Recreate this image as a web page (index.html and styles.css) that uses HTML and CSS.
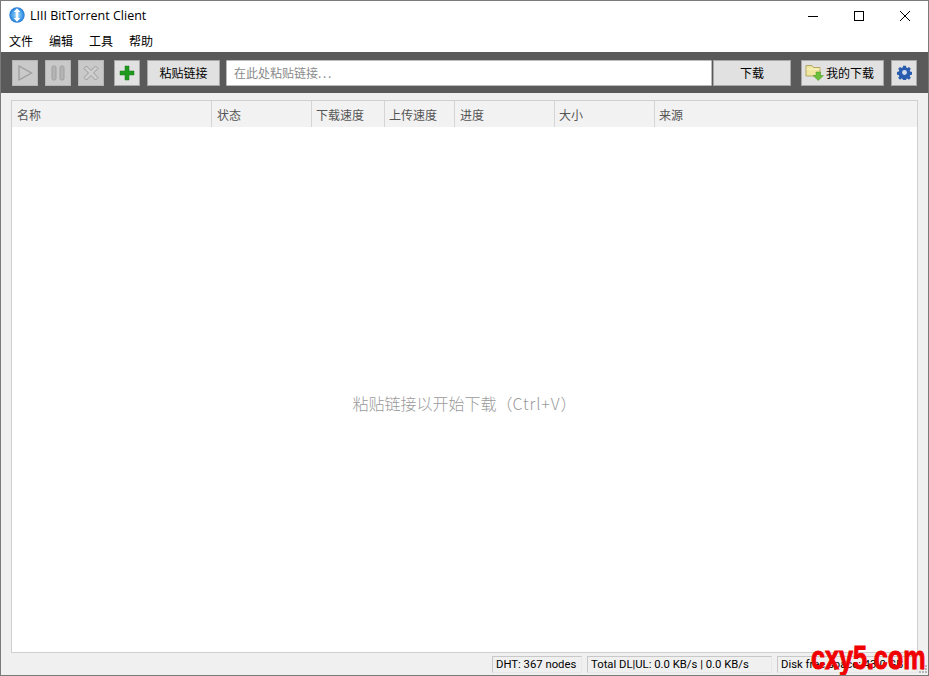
FILE: index.html
```html
<!DOCTYPE html>
<html lang="zh">
<head>
<meta charset="utf-8">
<title>LIII BitTorrent Client</title>
<link rel="stylesheet" href="styles.css">
</head>
<body>
<div class="window">
  <div class="titlebar">
    <svg class="app-icon" width="16" height="16" viewBox="0 0 16 16"><defs><radialGradient id="g" cx="50%" cy="50%" r="55%"><stop offset="0" stop-color="#a9dcfb"/><stop offset=".6" stop-color="#4aa3ec"/><stop offset="1" stop-color="#1568c8"/></radialGradient></defs><circle cx="8" cy="8" r="7.700" fill="url(#g)"/><path d="M8 1.200 11.300 5H9.300v6h2L8 14.800 4.700 11h2V5h-2z" fill="#fff"/></svg>
    <span class="title">LIII BitTorrent Client</span>
    <div class="winctrls">
      <span class="winbtn"><svg width="12" height="12" viewBox="0 0 12 12"><path d="M1 6.500h10" stroke="#000" fill="none"/></svg></span>
      <span class="winbtn"><svg width="12" height="12" viewBox="0 0 12 12"><rect x="1.500" y="1.500" width="9" height="9" stroke="#000" fill="none"/></svg></span>
      <span class="winbtn"><svg width="12" height="12" viewBox="0 0 12 12"><path d="M1 1l10 10M11 1 1 11" stroke="#000" fill="none"/></svg></span>
    </div>
  </div>
  <div class="menubar">
    <span class="menu">文件</span><span class="menu">编辑</span><span class="menu">工具</span><span class="menu">帮助</span>
  </div>
  <div class="toolbar">
    <button class="btn icon disabled"><svg width="20" height="20" viewBox="0 0 20 20"><path d="M4 3 16.500 10 4 17z" fill="#c9c9c9" stroke="#9c9c9c" stroke-width="1.300"/></svg></button>
    <button class="btn icon disabled"><svg width="20" height="20" viewBox="0 0 20 20"><rect x="4" y="3" width="4" height="14" rx="1.600" fill="#b4b4b4" stroke="#a0a0a0"/><rect x="12" y="3" width="4" height="14" rx="1.600" fill="#b4b4b4" stroke="#a0a0a0"/></svg></button>
    <button class="btn icon disabled"><svg width="20" height="20" viewBox="0 0 20 20"><path d="M3 5.500 5.500 3 10 7.500 14.500 3 17 5.500 12.500 10 17 14.500 14.500 17 10 12.500 5.500 17 3 14.500 7.500 10z" fill="#cfcfcf" stroke="#9c9c9c"/></svg></button>
    <button class="btn icon add"><svg width="16" height="16" viewBox="0 0 16 16"><path d="M6 1h4v5h5v4h-5v5H6v-5H1V6h5z" fill="#1f9a1f" stroke="#177a17" stroke-width=".5"/></svg></button>
    <button class="btn paste">粘贴链接</button>
    <div class="url">在此处粘贴链接<span class="dots">...</span></div>
    <button class="btn download">下载</button>
    <button class="btn mydl"><svg width="20" height="18" viewBox="0 0 20 18"><path d="M1 1.500h6l1.500 2H15V12H1z" fill="#efe6a0" stroke="#b3a765"/><path d="M1.500 5H14.500" stroke="#fbf5c4"/><path d="M11 8h4.500v3.500H18.500L13.250 16.500 8 11.500H11z" fill="#6abf3a" stroke="#4d9a26" stroke-width=".5"/></svg><span>我的下载</span></button>
    <button class="btn icon gear"><svg width="15" height="15" viewBox="0 0 16 16"><path d="M6.300 0h3.400l.4 2.200 1.300.6L13.300 1.500l2.200 2.200-1.300 1.900.6 1.300 2.200.4v3.400l-2.200.4-.6 1.300 1.300 1.900-2.200 2.200-1.900-1.300-1.300.6-.4 2.200H6.300l-.4-2.200-1.300-.6-1.900 1.300L.5 14.300l1.300-1.900-.6-1.300L-1 10.700V7.300l2.200-.4.600-1.300L.5 3.700 2.700 1.500l1.900 1.300 1.300-.6z" transform="translate(.8 .8) scale(.9)" fill="#2a5db0"/><circle cx="8" cy="8" r="2.600" fill="#d5deee"/></svg></button>
  </div>
  <div class="content">
    <div class="list">
      <div class="thead">
        <span class="th c-name">名称</span>
        <span class="th c-state">状态</span>
        <span class="th c-dl">下载速度</span>
        <span class="th c-ul">上传速度</span>
        <span class="th c-prog">进度</span>
        <span class="th c-size">大小</span>
        <span class="th c-src">来源</span>
      </div>
      <div class="empty">粘贴链接以开始下载（<span class="hint">Ctrl+V</span>）</div>
    </div>
  </div>
  <div class="statusbar">
    <span class="cell c1">DHT: 367 nodes</span>
    <span class="cell c2">Total DL|UL: 0.0 KB/s | 0.0 KB/s</span>
    <span class="cell c3">Disk free space: 43.0 GB</span>
  </div>
  <svg class="grip" width="11" height="11" viewBox="0 0 11 11"><path d="M8 1h2v2H8zM5 4h2v2H5zM8 4h2v2H8zM2 7h2v2H2zM5 7h2v2H5zM8 7h2v2H8z" fill="#b8b8b8"/></svg>
  <div class="watermark">cxy5.com</div>
</div>
</body>
</html>
```

FILE: styles.css
```css
* { box-sizing: border-box; }
html, body { margin: 0; padding: 0; }
body { width: 929px; height: 676px; overflow: hidden; background: #fff; }
.window {
  position: relative;
  width: 929px; height: 676px;
  display: flex; flex-direction: column;
  border: 1px solid #7a7a7a;
  font: 12px "Noto Sans CJK SC", "Noto Sans", sans-serif;
  color: #000;
  overflow: hidden;
}
.titlebar { height: 29px; display: flex; align-items: center; padding-left: 8px; background: #fff; flex: none; }
.app-icon { flex: none; margin-top: -2px; }
.title { margin-left: 5px; font: 12.5px "Open Sans", sans-serif; margin-top: -1px; }
.winctrls { margin-left: auto; display: flex; align-self: flex-start; }
.winbtn { width: 46px; height: 29px; display: flex; align-items: center; justify-content: center; }
.menubar { height: 22px; display: flex; flex: none; padding-left: 8px; gap: 16px; align-items: center; background: #fff; }
.menu { line-height: 22px; }
.toolbar {
  height: 41px; flex: none; background: #5a5a5a;
  display: flex; align-items: center; padding: 0 11px;
}
.btn {
  height: 26px; padding: 0; margin: 0;
  border: 1px solid #a8a8a8; background: #e1e1e1;
  display: flex; align-items: center; justify-content: center;
  font: 12px "Noto Sans CJK SC", sans-serif; color: #000;
}
.icon { width: 26px; margin-right: 7px; }
.disabled { background: #c9c9c9; border-color: #b5b5b5; }
.add { margin-left: 3px; margin-right: 7px; }
.paste { width: 73px; margin-right: 6px; }
.url {
  width: 486px; height: 26px; background: #fff; border: 1px solid #bbb;
  line-height: 24px; padding-left: 7px; color: #8a8a8a;
  border-radius: 1px;
}
.dots { letter-spacing: 1.6px; }
.download { width: 78px; margin-left: 1px; margin-right: 10px; }
.mydl { width: 83px; margin-right: 7px; gap: 1px; justify-content: flex-start; padding-left: 3px; }
.gear { margin-right: 0; }
.content { flex: 1; min-height: 0; background: #f0f0f0; padding: 7px 10px 0 10px; display: flex; }
.list { flex: 1; border: 1px solid #cfcfcf; background: #fff; display: flex; flex-direction: column; }
.thead { height: 26px; flex: none; background: #f2f2f2; display: flex; }
.th { border-right: 1px solid #d5d5d5; padding-left: 4px; line-height: 28px; color: #555; height: 26px; }
.c-name { width: 200px; padding-left: 5px; }
.c-state { width: 100px; padding-left: 5px; }
.c-dl { width: 73px; }
.c-ul { width: 70px; }
.c-prog { width: 100px; padding-left: 5px; }
.c-size { width: 100px; }
.c-src { flex: 1; border-right: 0; }
.empty { flex: 1; display: flex; align-items: center; justify-content: center; font-size: 16px; font-weight: 300; color: #9a9a9a; padding-top: 26px; }
.hint { letter-spacing: .9px; }
.statusbar { height: 22px; flex: none; background: #f0f0f0; display: flex; justify-content: flex-end; padding: 3px 10px 0 0; gap: 5px; overflow: hidden; }
.cell { height: 17px; border: 1px solid #c8c8c8; border-right-color: #e8e8e8; border-bottom-color: #e8e8e8; padding-left: 3px; font: 11.3px/15px Roboto, sans-serif; white-space: nowrap; overflow: hidden; }
.c1 { width: 90px; }
.c2 { width: 185px; }
.c3 { width: 141px; }
.grip { position: absolute; right: 0; bottom: 0; }
.watermark {
  position: absolute; right: 3px; bottom: -2px;
  font: bold 33px "Liberation Sans", sans-serif;
  -webkit-text-stroke: 1px #f00000;
  color: #f00000;
  white-space: nowrap;
  transform: scaleX(.76);
  transform-origin: right bottom;
}
```
